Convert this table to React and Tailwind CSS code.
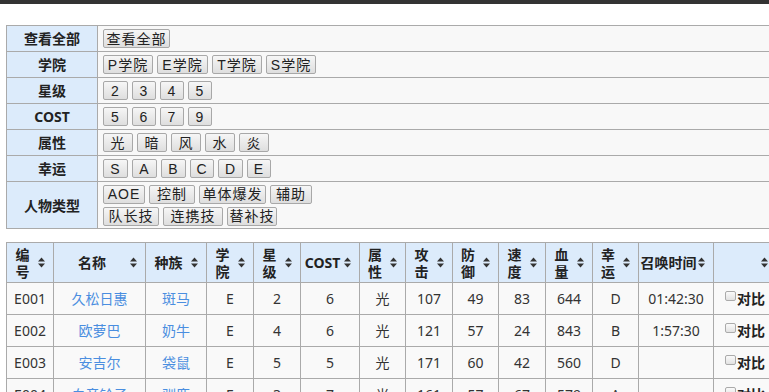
import React from "react";

const filters = [
  { label: "查看全部", rows: [[["查看全部", "w-[67px]"]]] },
  {
    label: "学院",
    rows: [[["P学院", "w-[50px]"], ["E学院", "w-[51px]"], ["T学院", "w-[50px]"], ["S学院", "w-[50px]"]]],
  },
  { label: "星级", rows: [[["2", "w-[25px]"], ["3", "w-[24px]"], ["4", "w-[24px]"], ["5", "w-[24px]"]]] },
  { label: "COST", rows: [[["5", "w-[25px]"], ["6", "w-[24px]"], ["7", "w-[24px]"], ["9", "w-[24px]"]]] },
  {
    label: "属性",
    rows: [[["光", "w-[30px]"], ["暗", "w-[30px]"], ["风", "w-[30px]"], ["水", "w-[30px]"], ["炎", "w-[30px]"]]],
  },
  {
    label: "幸运",
    rows: [[["S", "w-[25px]"], ["A", "w-[25px]"], ["B", "w-[25px]"], ["C", "w-[24px]"], ["D", "w-[25px]"], ["E", "w-[24px]"]]],
  },
  {
    label: "人物类型",
    tall: true,
    rows: [
      [["AOE", "w-[42px]"], ["控制", "w-[46px]"], ["单体爆发", "w-[67px]"], ["辅助", "w-[42px]"]],
      [["队长技", "w-[56px]"], ["连携技", "w-[60px]"], ["替补技", "w-[50px]"]],
    ],
  },
];

const cols = [
  ["编", "号"],
  ["名称"],
  ["种族"],
  ["学", "院"],
  ["星", "级"],
  ["COST"],
  ["属", "性"],
  ["攻", "击"],
  ["防", "御"],
  ["速", "度"],
  ["血", "量"],
  ["幸", "运"],
  ["召唤时间"],
  [""],
];

const data = [
  ["E001", "久松日惠", "斑马", "E", "2", "6", "光", "107", "49", "83", "644", "D", "01:42:30"],
  ["E002", "欧萝巴", "奶牛", "E", "4", "6", "光", "121", "57", "24", "843", "B", "1:57:30"],
  ["E003", "安吉尔", "袋鼠", "E", "5", "5", "光", "171", "60", "42", "560", "D", ""],
  ["E004", "白音铃子", "驯鹿", "E", "3", "7", "光", "161", "57", "67", "579", "A", ""],
];

function SortIcon() {
  return (
    <svg width="7" height="11" viewBox="0 0 7 11" className="shrink-0">
      <path d="M3.5 0.5 L7 4.5 L0 4.5 Z" fill="#333" />
      <path d="M0 6.5 L7 6.5 L3.5 10.5 Z" fill="#333" />
    </svg>
  );
}

function Btn({ text, w }) {
  return (
    <span
      className={`${w} h-[19px] inline-flex items-center justify-center border border-[#a8a8a8] rounded-[2px] bg-gradient-to-b from-[#f6f6f6] to-[#dedede] text-[14px] leading-none text-[#222] tracking-[1px]`}
    >
      {text}
    </span>
  );
}

export default function App() {
  const cell = "border-r border-b border-[#aaa]";
  return (
    <div className="w-[769px] h-[392px] overflow-hidden bg-white font-['Liberation_Sans','Noto_Sans_CJK_SC',sans-serif]">
      <div className="h-[4px] bg-[#333]" />

      {/* filter table */}
      <div className="mt-[21px] ml-[6px] w-[800px] border-t border-l border-[#aaa]">
        {filters.map((f) => (
          <div key={f.label} className={`flex ${f.tall ? "h-[47px]" : "h-[26px]"}`}>
            <div
              className={`w-[91px] shrink-0 ${cell} bg-[#dcebfb] flex items-center justify-center text-[14px] font-bold text-[#222] font-['Noto_Sans','Noto_Sans_CJK_SC',sans-serif]`}
            >
              {f.label}
            </div>
            <div className={`flex-1 ${cell} bg-[#f8f8f8] pl-[5px] flex flex-col justify-center gap-[3px]`}>
              {f.rows.map((r, i) => (
                <div key={i} className="flex gap-[4px]">
                  {r.map(([t, w]) => (
                    <Btn key={t} text={t} w={w} />
                  ))}
                </div>
              ))}
            </div>
          </div>
        ))}
      </div>

      {/* data table */}
      <div className="mt-[13px] ml-[6px] w-[800px] border-t border-l border-[#aaa] font-['Noto_Sans','Noto_Sans_CJK_SC',sans-serif] text-[14px]">
        <div className="grid grid-cols-[47px_92px_61px_47px_47px_59px_46px_47px_46px_47px_47px_46px_75px_63px]">
          {cols.map((c, i) => (
            <div key={i} className={`${cell} h-[40px] bg-[#dcebfb] flex items-center pr-[8px] font-bold text-[#222]`}>
              <div className="flex-1 flex flex-col items-center leading-[17px]">
                {c.map((t, j) => (
                  <span key={j}>{t}</span>
                ))}
              </div>
              <SortIcon />
            </div>
          ))}
          {data.map((row) => (
            <React.Fragment key={row[0]}>
              {row.map((v, i) => (
                <div
                  key={i}
                  className={`${cell} h-[32px] bg-[#f9f9f9] flex items-center justify-center ${
                    i === 1 || i === 2 ? "text-[#4a8ee0]" : "text-[#333]"
                  }`}
                >
                  {v}
                </div>
              ))}
              <div className={`${cell} h-[32px] bg-[#f9f9f9] flex items-center justify-center`}>
                <span className="w-[11px] h-[10px] mb-[5px] mr-[1px] border border-[#aaa] rounded-[2px] bg-gradient-to-b from-[#fafafa] to-[#e2e2e2]" />
                <span className="font-bold text-[#222]">对比</span>
              </div>
            </React.Fragment>
          ))}
        </div>
      </div>
    </div>
  );
}
